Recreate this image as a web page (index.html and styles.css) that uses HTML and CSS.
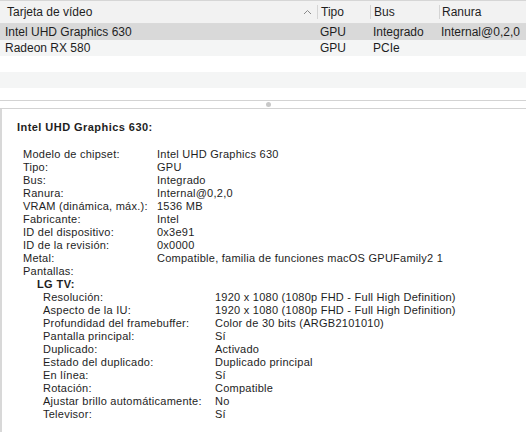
FILE: index.html
```html
<!DOCTYPE html>
<html lang="es">
<head>
<meta charset="utf-8">
<title>Tarjeta de vídeo</title>
<link rel="stylesheet" href="styles.css">
</head>
<body>
<div class="window">
  <div class="list">
    <div class="row head">
      <div class="cell c-name">Tarjeta de vídeo<span class="sort"><svg width="9" height="6" viewBox="0 0 9 6"><path d="M1 5 L4.5 1.5 L8 5" fill="none" stroke="#8a8a8a" stroke-width="1"/></svg></span></div>
      <div class="cell c-type sep">Tipo</div>
      <div class="cell c-bus sep">Bus</div>
      <div class="cell c-slot sep">Ranura</div>
    </div>
    <div class="row selected">
      <div class="cell c-name">Intel UHD Graphics 630</div>
      <div class="cell c-type">GPU</div>
      <div class="cell c-bus">Integrado</div>
      <div class="cell c-slot">Internal@0,2,0</div>
    </div>
    <div class="row alt">
      <div class="cell c-name">Radeon RX 580</div>
      <div class="cell c-type">GPU</div>
      <div class="cell c-bus">PCIe</div>
      <div class="cell c-slot"></div>
    </div>
    <div class="row"></div>
    <div class="row alt"></div>
    <div class="row short"></div>
  </div>
  <div class="splitter"><span class="grip"></span></div>
  <div class="detail">
    <h2 class="title">Intel UHD Graphics 630:</h2>
    <dl class="props">
      <dt>Modelo de chipset:</dt><dd>Intel UHD Graphics 630</dd>
      <dt>Tipo:</dt><dd>GPU</dd>
      <dt>Bus:</dt><dd>Integrado</dd>
      <dt>Ranura:</dt><dd>Internal@0,2,0</dd>
      <dt>VRAM (dinámica, máx.):</dt><dd>1536 MB</dd>
      <dt>Fabricante:</dt><dd>Intel</dd>
      <dt>ID del dispositivo:</dt><dd>0x3e91</dd>
      <dt>ID de la revisión:</dt><dd>0x0000</dd>
      <dt>Metal:</dt><dd>Compatible, familia de funciones macOS GPUFamily2 1</dd>
      <dt>Pantallas:</dt><dd></dd>
    </dl>
    <div class="display">
      <div class="display-name">LG TV:</div>
      <dl class="props sub">
        <dt>Resolución:</dt><dd>1920 x 1080 (1080p FHD - Full High Definition)</dd>
        <dt>Aspecto de la IU:</dt><dd>1920 x 1080 (1080p FHD - Full High Definition)</dd>
        <dt>Profundidad del framebuffer:</dt><dd>Color de 30 bits (ARGB2101010)</dd>
        <dt>Pantalla principal:</dt><dd>Sí</dd>
        <dt>Duplicado:</dt><dd>Activado</dd>
        <dt>Estado del duplicado:</dt><dd>Duplicado principal</dd>
        <dt>En línea:</dt><dd>Sí</dd>
        <dt>Rotación:</dt><dd>Compatible</dd>
        <dt>Ajustar brillo automáticamente:</dt><dd>No</dd>
        <dt>Televisor:</dt><dd>Sí</dd>
      </dl>
    </div>
  </div>
</div>
</body>
</html>
```

FILE: styles.css
```css
* { box-sizing: border-box; }

html, body {
  margin: 0;
  padding: 0;
  background: #ffffff;
}

body {
  font-family: "Liberation Sans", Arial, sans-serif;
  color: #1e1e1e;
  width: 526px;
  height: 432px;
  overflow: hidden;
}

.window {
  display: flex;
  flex-direction: column;
  height: 100%;
}

/* ---- top list ---- */
.list {
  height: 100px;
  border-top: 1px solid #d6d6d6;
}

.row {
  display: flex;
  height: 16px;
  font-size: 12px;
  line-height: 16px;
}

.row.head {
  height: 23px;
  line-height: 23px;
  background: #f2f2f2;
  border-bottom: 1px solid #dadada;
}

.row.selected { background: #d9d9d9; }
.row.alt { background: #f4f5f5; }
.row.short { height: 12px; }

.cell {
  white-space: nowrap;
  overflow: hidden;
  position: relative;
}

.c-name { width: 316px; padding-left: 5px; }
.c-type { width: 53px; padding-left: 4px; }
.c-bus  { width: 69px; padding-left: 4px; }
.c-slot { flex: 1; padding-left: 3px; }

.head .c-name { padding-left: 7px; }

.cell.sep { border-left: 1px solid #dcdcdc; }
.head .cell.sep { border-left-color: transparent; }
.head .cell.sep::before {
  content: "";
  position: absolute;
  left: 0;
  top: 4px;
  bottom: 4px;
  border-left: 1px solid #d4d4d4;
}

.sort {
  position: absolute;
  right: 4px;
  top: 8px;
  line-height: 0;
}

/* ---- splitter ---- */
.splitter {
  height: 9px;
  border-top: 1px solid #d3d3d3;
  border-bottom: 1px solid #d3d3d3;
  background: #ffffff;
  display: flex;
  align-items: center;
  justify-content: center;
  padding-left: 10px;
}

.grip {
  width: 5px;
  height: 5px;
  border-radius: 50%;
  background: #c8c8c8;
}

/* ---- detail pane ---- */
.detail {
  flex: 1;
  border-left: 2px solid #d8d8d8;
  padding: 12px 0 0 15px;
  font-size: 11px;
  line-height: 13px;
  letter-spacing: 0.25px;
}

.title {
  margin: 0 0 14px 0;
  font-size: 11px;
  font-weight: bold;
  line-height: 13px;
  letter-spacing: 0.45px;
}

.props {
  display: grid;
  grid-template-columns: 134px 1fr;
  margin: 0 0 0 6px;
}

.props dt, .props dd {
  margin: 0;
  white-space: nowrap;
}

.display { margin-left: 20px; }

.display-name { font-weight: bold; letter-spacing: 0.4px; }

.props.sub {
  grid-template-columns: 172px 1fr;
  margin-left: 6px;
}
```
